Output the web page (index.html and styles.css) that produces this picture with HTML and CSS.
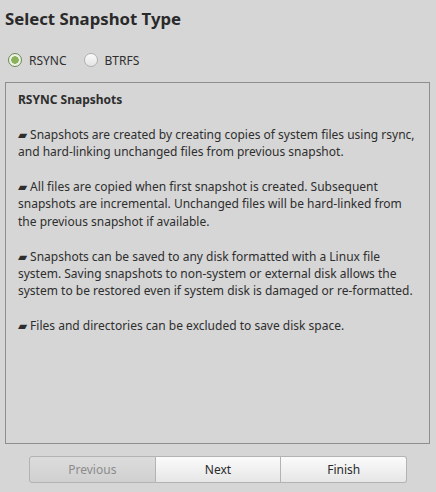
FILE: index.html
```html
<!DOCTYPE html>
<html>
<head>
<meta charset="utf-8">
<link rel="stylesheet" href="styles.css">
</head>
<body>
<div class="page">
  <h1 class="title">Select Snapshot Type</h1>
  <div class="radios">
    <label class="radio"><span class="dot checked"></span>RSYNC</label>
    <label class="radio"><span class="dot"></span>BTRFS</label>
  </div>
  <div class="box">
    <div class="heading">RSYNC Snapshots</div>
    <p>▰ Snapshots are created by creating copies of system files using rsync, and hard-linking unchanged files from previous snapshot.</p>
    <p>▰ All files are copied when first snapshot is created. Subsequent snapshots are incremental. Unchanged files will be hard-linked from the previous snapshot if available.</p>
    <p>▰ Snapshots can be saved to any disk formatted with a Linux file system. Saving snapshots to non-system or external disk allows the system to be restored even if system disk is damaged or re-formatted.</p>
    <p>▰ Files and directories can be excluded to save disk space.</p>
  </div>
  <div class="buttons">
    <button class="btn disabled">Previous</button>
    <button class="btn">Next</button>
    <button class="btn">Finish</button>
  </div>
</div>
</body>
</html>
```
FILE: styles.css
```css
html, body {
  margin: 0;
  padding: 0;
  background: #d6d6d6;
}
body {
  font-family: "Noto Sans", "Open Sans", sans-serif;
  color: #2e2e2e;
  font-size: 12px;
}
.page {
  width: 436px;
  height: 492px;
  box-sizing: border-box;
  padding: 6px 6px 0 5px;
  display: flex;
  flex-direction: column;
}
.title {
  margin: 0;
  font-size: 16.75px;
  font-weight: bold;
  line-height: 26px;
  color: #2a2a2a;
}
.radios {
  display: flex;
  gap: 17px;
  margin-top: 16px;
  height: 24px;
  align-items: center;
  padding-left: 3px;
}
.radio {
  display: flex;
  align-items: center;
  gap: 7px;
  font-size: 12px;
}
.dot {
  width: 14px;
  height: 14px;
  border-radius: 50%;
  box-sizing: border-box;
  border: 1px solid #b0b0b0;
  background: linear-gradient(#fbfbfb, #e4e4e4);
}
.dot.checked {
  border-color: #6a8a50;
  background: radial-gradient(circle, #8bb15a 0, #8bb15a 3.5px, #eef3e8 4px, #e6ece0 100%);
}
.box {
  margin-top: 10px;
  height: 362px;
  box-sizing: border-box;
  border: 1px solid #8e8e8e;
  padding: 8px 12px;
  line-height: 17.4px;
}
.heading {
  font-weight: bold;
  margin-bottom: 17.4px;
}
.box p {
  margin: 0 0 17.4px 0;
}
.buttons {
  display: flex;
  margin: 12px 0 0 24px;
  width: 378px;
}
.btn {
  flex: 1;
  height: 27px;
  font-family: "Noto Sans", "Open Sans", sans-serif;
  font-size: 12px;
  color: #2a2a2a;
  border: 1px solid #b3b3b3;
  border-left-width: 0;
  background: linear-gradient(#fbfbfb, #e6e6e6);
  margin: 0;
  padding: 0;
}
.btn:first-child {
  border-left-width: 1px;
  border-radius: 3px 0 0 3px;
}
.btn:last-child {
  border-radius: 0 3px 3px 0;
}
.btn.disabled {
  color: #8c8c8c;
  background: linear-gradient(#dcdcdc, #d0d0d0);
}
```
